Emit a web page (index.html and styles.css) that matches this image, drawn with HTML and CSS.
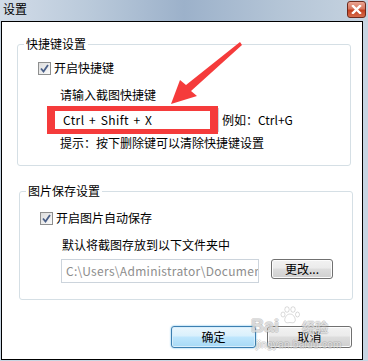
FILE: index.html
```html
<!DOCTYPE html>
<html lang="zh-CN">
<head>
    <meta charset="UTF-8">
    <title>设置</title>
    <link rel="stylesheet" href="styles.css">
</head>
<body>
    <div class="titlebar">
        <span class="title">设置</span>
        <div class="close">
            <svg width="11" height="9" viewBox="0 0 11 9"><path d="M2 1 L9 8 M9 1 L2 8" stroke="#fff" stroke-width="2.4" stroke-linecap="square"/></svg>
        </div>
    </div>
    <div class="window">
        <div class="group group-keys">
            <span class="legend">快捷键设置</span>
            <label class="check-row">
                <span class="checkbox"><svg width="13" height="13" viewBox="0 0 13 13"><path d="M3 6.5 L5.5 9.5 L10 3" fill="none" stroke="#4a5f88" stroke-width="1.8"/></svg></span>
                开启快捷键
            </label>
            <div class="text-row">请输入截图快捷键</div>
            <div class="input-row">
                <div class="input key-input">Ctrl + Shift + X</div>
                <span class="example">例如<span class="colon">：</span>Ctrl+G</span>
                <div class="mark"></div>
            </div>
            <div class="text-row hint">提示<span class="colon">：</span>按下删除键可以清除快捷键设置</div>
        </div>

        <div class="group group-save">
            <span class="legend">图片保存设置</span>
            <label class="check-row">
                <span class="checkbox"><svg width="13" height="13" viewBox="0 0 13 13"><path d="M3 6.5 L5.5 9.5 L10 3" fill="none" stroke="#4a5f88" stroke-width="1.8"/></svg></span>
                开启图片自动保存
            </label>
            <div class="text-row">默认将截图存放到以下文件夹中</div>
            <div class="path-row">
                <div class="input path-input">C:\Users\Administrator\Documents</div>
                <button class="btn btn-small">更改...</button>
            </div>
        </div>

        <div class="actions">
            <button class="btn btn-default">确定</button>
            <button class="btn">取消</button>
        </div>

        <svg class="arrow" width="360" height="337" viewBox="2 22 360 337">
            <polygon points="171,104 197,96 191,91 242,45 240,42 186,85 180,80" fill="#f53b3b"/>
        </svg>

        <div class="watermark">
            <div class="wm-logo">
                <span class="wm-bai">Bai</span>
                <svg class="wm-paw" width="21" height="18" viewBox="0 0 21 18">
                    <g fill="none" stroke="rgba(150,150,150,0.35)" stroke-width="1">
                        <ellipse cx="7" cy="3.5" rx="2.2" ry="2.8"/>
                        <ellipse cx="13" cy="3.5" rx="2.2" ry="2.8"/>
                        <ellipse cx="3" cy="8.5" rx="2" ry="2.5"/>
                        <ellipse cx="17.5" cy="8.5" rx="2" ry="2.5"/>
                        <path d="M10 8 C6 8 4 13 5 15.5 C6 17.5 9 16.5 10 16.5 C11 16.5 14 17.5 15 15.5 C16 13 14 8 10 8 Z"/>
                    </g>
                </svg>
                <span class="wm-jy">经验</span>
            </div>
            <div class="wm-url">jingyan.baidu.com</div>
        </div>
    </div>
</body>
</html>
```

FILE: styles.css
```css
body {
    margin: 0;
    width: 368px;
    height: 361px;
    overflow: hidden;
    background: #c8d5e2;
    font-family: "Noto Sans CJK SC", "Microsoft YaHei", sans-serif;
    font-size: 12px;
    color: #000;
}
.titlebar {
    height: 21px;
    display: flex;
    justify-content: space-between;
    align-items: flex-start;
    background: linear-gradient(90deg, #d2dce8 0%, #b9c9da 25%, #9cb1ca 50%, #b3c4d6 75%, #c6d3e0 100%);
}
.title {
    margin: 1px 0 0 3px;
    line-height: 16px;
    font-size: 12px;
}
.close {
    width: 19px;
    height: 17px;
    margin: 1px 2px 0 0;
    box-sizing: border-box;
    border: 1px solid #6d2a1d;
    border-radius: 3px;
    background: linear-gradient(#eba593 0%, #d7765e 45%, #c4401f 55%, #d66c4c 100%);
    display: flex;
    align-items: center;
    justify-content: center;
}
.window {
    position: relative;
    margin-left: 1px;
    width: 362px;
    height: 339px;
    box-sizing: border-box;
    border: 1px solid #000;
    background: #fff;
    display: flex;
    flex-direction: column;
}
.group {
    position: relative;
    width: 334px;
    box-sizing: border-box;
    border: 1px solid #d5dfe5;
    border-radius: 3px;
    display: flex;
    flex-direction: column;
    align-items: flex-start;
    padding-left: 19px;
}
.group-keys {
    margin: 22px 0 0 15px;
    padding-top: 15px;
    padding-bottom: 14px;
}
.group-save {
    margin: 25px 0 0 17px;
    padding-top: 18px;
    padding-bottom: 16px;
}
.legend {
    position: absolute;
    top: -9px;
    left: 6px;
    padding: 0 2px;
    line-height: 16px;
    background: #fff;
}
.check-row {
    display: flex;
    align-items: center;
    height: 16px;
    line-height: 16px;
}
.checkbox {
    width: 13px;
    height: 13px;
    margin: 1px 3px 0 1px;
    box-sizing: border-box;
    border: 1px solid #8e8f8f;
    background: linear-gradient(135deg, #dcdcdc, #fbfbfb);
    display: flex;
}
.checkbox svg {
    margin: -1px;
}
.colon {
    font-family: "Noto Sans CJK TC", sans-serif;
}
.text-row {
    margin: 11px 0 0 23px;
    line-height: 16px;
}
.hint {
    margin-top: 3px;
}
.input-row {
    position: relative;
    display: flex;
    align-items: center;
    margin: 5px 0 0 15px;
}
.input {
    box-sizing: border-box;
    border: 1px solid #ccd4dc;
    background: #fff;
    white-space: nowrap;
    overflow: hidden;
}
.key-input {
    width: 167px;
    height: 24px;
    line-height: 22px;
    padding-left: 10px;
    letter-spacing: 0.4px;
    word-spacing: 1.5px;
}
.example {
    margin-left: 3px;
    line-height: 16px;
}
.mark {
    position: absolute;
    left: -5px;
    top: -2px;
    width: 171px;
    height: 28px;
    box-sizing: border-box;
    border: 5px solid #f53b3b;
    border-left-width: 8px;
    border-right-width: 8px;
}
.path-row {
    display: flex;
    align-items: flex-start;
    margin: 6px 0 0 22px;
}
.path-input {
    width: 198px;
    height: 24px;
    line-height: 22px;
    padding-left: 4px;
    color: #8d8d8d;
    letter-spacing: 0.3px;
    text-overflow: clip;
}
.btn {
    font-family: inherit;
    font-size: 12px;
    color: #000;
    box-sizing: border-box;
    border: 1px solid #707070;
    border-radius: 3px;
    background: linear-gradient(#f2f2f2 0%, #ebebeb 45%, #dddddd 50%, #cfcfcf 100%);
    box-shadow: inset 0 0 0 1px #fcfcfc;
    padding: 0;
    line-height: 18px;
}
.btn-small {
    width: 62px;
    height: 20px;
    margin-left: 12px;
}
.actions {
    display: flex;
    justify-content: flex-end;
    gap: 11px;
    margin-top: 26px;
    padding-right: 10px;
}
.actions .btn {
    width: 85px;
    height: 22px;
}
.btn-default {
    border-color: #3c7fb1;
    background: linear-gradient(#eaf6fd 0%, #d9f0fc 45%, #bee6fd 50%, #a7d9f5 100%);
    box-shadow: inset 0 0 0 1px #d8eefb, 0 0 2px #5ab4e6;
}
.arrow {
    position: absolute;
    left: 0;
    top: 0;
    pointer-events: none;
}
.watermark {
    position: absolute;
    left: 249px;
    top: 284px;
    pointer-events: none;
    color: rgba(255, 255, 255, 0.55);
    text-shadow: 1px 0 rgba(140, 140, 140, 0.3), -1px 0 rgba(140, 140, 140, 0.3), 0 1px rgba(140, 140, 140, 0.3), 0 -1px rgba(140, 140, 140, 0.3);
    font-family: "Liberation Sans", sans-serif;
}
.wm-logo {
    display: flex;
    align-items: flex-end;
}
.wm-bai {
    font-size: 18px;
    font-weight: bold;
    line-height: 16px;
}
.wm-paw {
    margin: 0 1px 10px 1px;
}
.wm-jy {
    font-family: "Noto Sans CJK SC", sans-serif;
    font-size: 13px;
    font-weight: bold;
    line-height: 14px;
}
.wm-url {
    font-size: 10px;
    line-height: 12px;
    margin: 5px 0 0 5px;
    letter-spacing: 0.3px;
}
```
